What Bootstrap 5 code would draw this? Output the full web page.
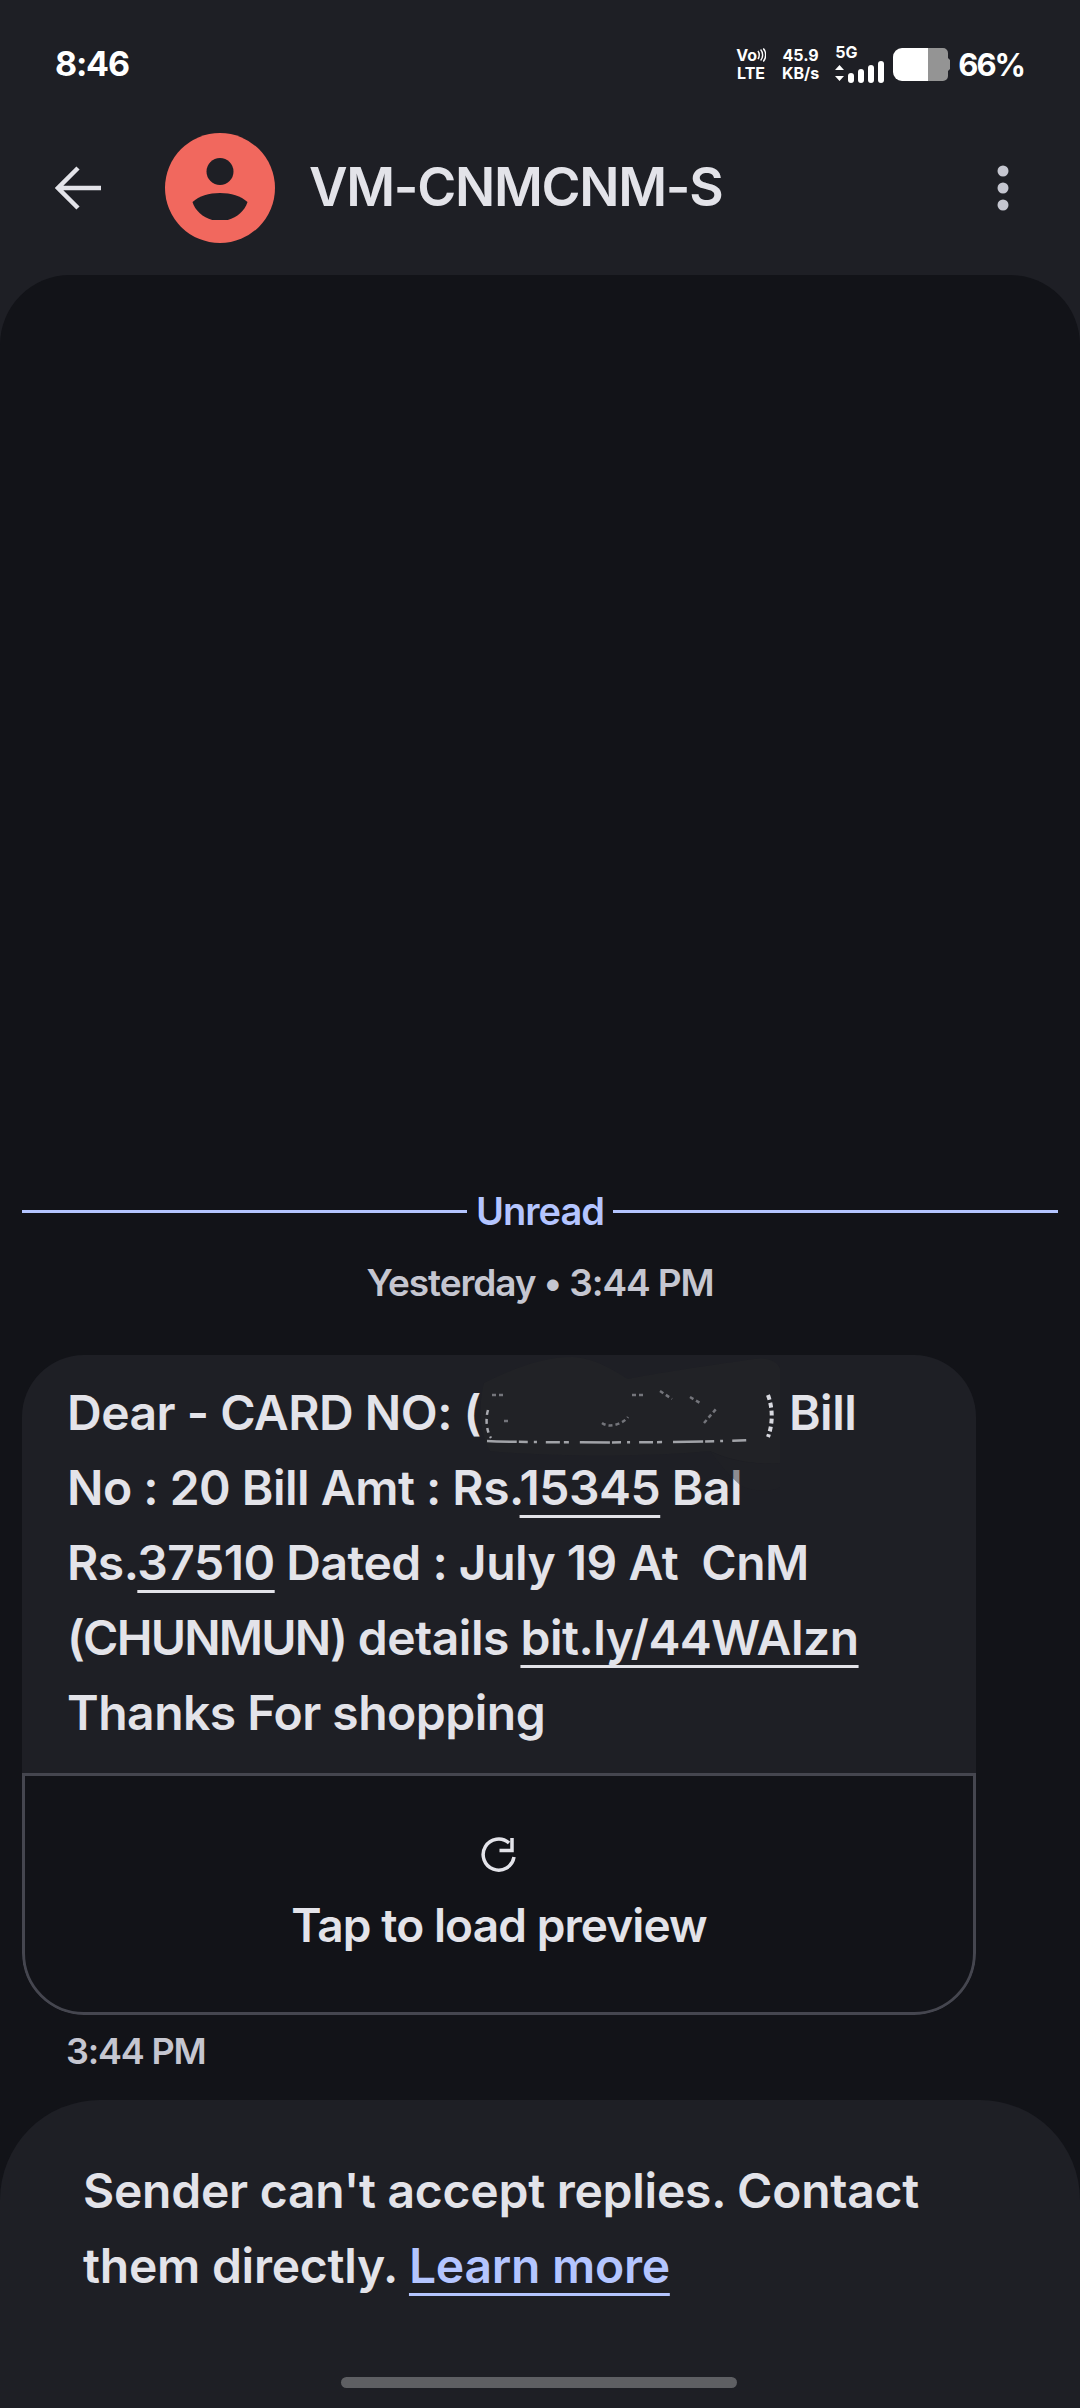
<!DOCTYPE html>
<html lang="en">
<head>
  <meta charset="UTF-8">
  <meta name="viewport" content="width=device-width, initial-scale=1.0">
  <title>VM-CNMCNM-S</title>
  <link href="https://cdn.jsdelivr.net/npm/bootstrap@5.3.2/dist/css/bootstrap.min.css" rel="stylesheet">
  <script src="https://cdn.jsdelivr.net/npm/bootstrap@5.3.2/dist/js/bootstrap.bundle.min.js"></script>
  <style>
    html, body { margin: 0; width: 1080px; height: 2408px; overflow: hidden; }
    body { background: #1e1f25; color: #e3e3e9; font-family: Inter, "Noto Sans", sans-serif; font-weight: 600; }
    .phone { width: 1080px; height: 2408px; }

    /* status bar */
    .status-row { height: 112px; padding: 16px 56px 0 55px; color: #fff; }
    .clock { font-size: 34px; font-weight: 700; line-height: 1; letter-spacing: -1.2px; }
    .tiny { font-size: 16px; font-weight: 700; line-height: 18px; text-align: center; }
    .pct { font-size: 31px; font-weight: 700; line-height: 1; letter-spacing: -2px; }
    .batt { width: 57px; height: 33px; }

    /* header */
    .top-row { height: 151px; padding: 0 70px 0 55px; margin-bottom: 12px; }
    .avatar { width: 110px; height: 110px; border-radius: 50%; background: #f1685e; margin-left: 64px; }
    .sender { font-size: 53px; line-height: 1; margin-left: 34px; letter-spacing: -1.3px; color: #e3e3e9; }

    /* conversation */
    .thread { background: #121318; border-radius: 70px 70px 0 0; padding: 0 22px; min-height: 0; }
    .unread-row { color: #b4c5ff; font-size: 38px; line-height: 46px; letter-spacing: -1px; gap: 9px; margin-bottom: 26px; }
    .unread-row i { height: 3px; background: #b4c5ff; flex: 1; display: block; }
    .day-stamp { color: #c5c6d0; font-size: 37px; line-height: 46px; text-align: center; letter-spacing: -1.1px; margin-bottom: 49px; }
    .bubble { width: 954px; background: #1e1f25; border-radius: 62px; overflow: hidden; position: relative; }
    .bubble-text { font-size: 48px; line-height: 75px; padding: 20px 30px 23px 45px; letter-spacing: -.5px; white-space: nowrap; }
    .bubble-text u { text-underline-offset: 10px; text-decoration-thickness: 3px; }
    .tight-caps { letter-spacing: -1.8px; }
    .gap-slot { display: inline-block; width: 279px; }
    .smudge { position: absolute; left: 420px; top: 0; width: 380px; height: 160px; }
    .preview-box { height: 242px; background: #121318; border: 3px solid #45464f; border-radius: 0 0 62px 62px; padding-top: 60px; }
    .preview-label { font-size: 46px; line-height: 56px; letter-spacing: -.9px; margin-top: 25px; }
    .msg-time { color: #c5c6d0; font-size: 36px; line-height: 46px; letter-spacing: -1.2px; padding: 13px 0 26px 44px; }

    /* footer */
    .reply-note { height: 308px; background: #1e1f25; border-radius: 100px 100px 0 0; margin: 0 -22px; padding: 53px 30px 0 83px; font-size: 48px; line-height: 75px; letter-spacing: -.25px; position: relative; white-space: nowrap; }
    .reply-note a { color: #b4c5ff; text-underline-offset: 10px; text-decoration-thickness: 3px; }
    .home-pill { position: absolute; left: 341px; top: 277px; width: 396px; height: 11px; border-radius: 6px; background: #5e5f63; }
  </style>
</head>
<body>
  <div class="phone d-flex flex-column">

    <!-- status bar -->
    <div class="status-row d-flex align-items-center justify-content-between">
      <span class="clock">8:46</span>
      <div class="d-flex align-items-center">
        <div class="tiny me-3">
          <div class="d-flex align-items-center justify-content-center">Vo<svg width="9" height="14" viewBox="0 0 9 14" fill="none" stroke="#fff" stroke-width="1.6"><path d="M1 3c2 2 2 6 0 8M4 1.500c3 3 3 8 0 11M7 .5c3.500 3.500 3.500 9.500 0 13" transform="scale(.9 1)"/></svg></div>
          <div>LTE</div>
        </div>
        <div class="tiny me-3">
          <div>45.9</div>
          <div>KB/s</div>
        </div>
        <div class="tiny me-2">
          <div class="text-start">5G</div>
          <svg class="d-block" width="50" height="24" viewBox="0 0 50 24" fill="#fff">
            <path d="M0 9l4.500-5 4.500 5zM0 15h9l-4.500 5z"/>
            <rect x="13" y="12" width="6" height="10" rx="3"/>
            <rect x="23" y="8" width="6" height="14" rx="3"/>
            <rect x="33" y="4" width="6" height="18" rx="3"/>
            <rect x="43" y="0" width="6" height="22" rx="3"/>
          </svg>
        </div>
        <svg class="batt me-2" viewBox="0 0 57 33">
          <path d="M35 0h15a5 5 0 0 1 5 5v5l2 2v9l-2 2v5a5 5 0 0 1-5 5H35z" fill="#949494"/>
          <path d="M35 0H9a9 9 0 0 0-9 9v15a9 9 0 0 0 9 9h26z" fill="#fff"/>
        </svg>
        <span class="pct">66%</span>
      </div>
    </div>

    <!-- header -->
    <div class="top-row d-flex align-items-center">
      <svg width="46" height="44" viewBox="0 0 46 44" fill="none" stroke="#e3e3e9" stroke-width="4.500"><path d="M46 22H3M23 2L3 22l20 20"/></svg>
      <div class="avatar d-flex align-items-center justify-content-center">
        <svg width="56" height="64" viewBox="0 -2 56 64" fill="#1e1f25">
          <circle cx="28" cy="13.500" r="13.500"/>
          <path d="M28 35c11 0 21 3 27.500 9C52 55 41 63 28 63S4 55 .5 44C7 38 17 35 28 35z"/>
        </svg>
      </div>
      <span class="sender flex-grow-1">VM-CNMCNM-S</span>
      <svg width="14" height="46" viewBox="0 0 14 46" fill="#c5c6d0"><circle cx="7" cy="6" r="5.500"/><circle cx="7" cy="23" r="5.500"/><circle cx="7" cy="40" r="5.500"/></svg>
    </div>

    <!-- conversation -->
    <div class="thread flex-grow-1 d-flex flex-column justify-content-end">
      <div class="unread-row d-flex align-items-center"><i></i><span>Unread</span><i></i></div>
      <div class="day-stamp">Yesterday • 3:44 PM</div>

      <div class="bubble">
        <div class="bubble-text">Dear - CARD NO: (<span class="gap-slot"></span>) Bill<br>No : 20 Bill Amt : Rs.<u>15345</u> Bal<br>Rs.<u>37510</u> Dated : July 19 At &nbsp;CnM<br><span class="tight-caps">(CHUNMUN)</span> details <u>bit.ly/44WAlzn</u><br>Thanks For shopping</div>
        <!-- hand scribbled redaction over the card number -->
        <svg class="smudge" viewBox="0 0 380 160">
          <path d="M42 28C70 14 100 2 130 2c24 1 42 14 56 22 30-6 70-12 126-20 12-2 24 2 26 10l0 94c-14 2-44 0-70-12-60 6-160 6-220 0C38 80 36 50 42 28z" fill="#212226"/>
          <path d="M268 96c22 12 52 14 70 12l0 24c-10 6-30 4-40-2-12-10-22-24-30-34z" fill="#212226" opacity=".45"/>
          <path d="M45 86c40 2 210 2 262-1" fill="none" stroke="#d9dae0" stroke-width="2.500" stroke-dasharray="30 2 9 6 3 9 14 4 5 11" opacity=".7"/>
          <path d="M46 55c-3 10-1 22 3 28" fill="none" stroke="#a9aab0" stroke-width="2.500" stroke-dasharray="5 4"/>
          <path d="M326 40c5 14 5 28 0 42" fill="none" stroke="#d9dae0" stroke-width="4" stroke-dasharray="5 3"/>
          <path d="M50 40h14M62 66h5M160 68c8 6 22 0 26-6M190 40h12M218 36l12 8M248 42l10 6M262 68l12-14" fill="none" stroke="#74757b" stroke-width="2.500" stroke-dasharray="4 3"/>
        </svg>
        <div class="preview-box text-center">
          <svg width="36" height="36" viewBox="0 0 36 36" fill="none" stroke="#e3e3e9" stroke-width="3.500"><path d="M33 21a15.500 15.500 0 1 1-5-14M31 2v12.500H18.500"/></svg>
          <div class="preview-label">Tap to load preview</div>
        </div>
      </div>
      <div class="msg-time">3:44 PM</div>

      <div class="reply-note">
        Sender can't accept replies. Contact<br>them directly. <a href="#">Learn more</a>
        <div class="home-pill"></div>
      </div>
    </div>
  </div>
</body>
</html>
